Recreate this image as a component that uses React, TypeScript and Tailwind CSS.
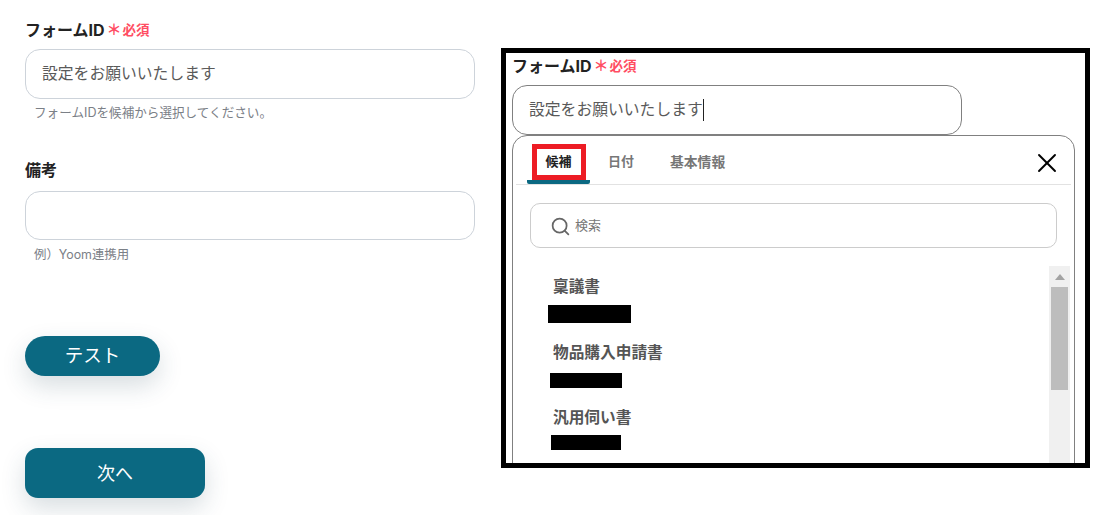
import { Search, X } from "lucide-react";

const font = "font-['Inter','Noto_Sans_CJK_JP',sans-serif]";

const candidates = [
  { name: "稟議書", barClass: "ml-[-5px] mt-[7px] h-[18px] w-[83px]", gap: "" },
  { name: "物品購入申請書", barClass: "ml-[-3px] mt-[9px] h-[15px] w-[72px]", gap: "mt-[19px]" },
  { name: "汎用伺い書", barClass: "ml-[-2px] mt-[6px] h-[15px] w-[70px]", gap: "mt-[19px]" },
];

function FieldLabel({ required, children }: { required?: boolean; children: string }) {
  return (
    <div className="flex h-[20px] items-center">
      <span className="text-[16px] leading-[20px] font-bold text-[#222]">{children}</span>
      {required && (
        <span className="ml-[2px] flex items-center text-[13.5px] leading-[20px] font-bold text-[#ff4d62]">
          <span className="mr-[1px] text-[15px] leading-[20px]">＊</span>
          必須
        </span>
      )}
    </div>
  );
}

function LeftForm() {
  return (
    <div className="flex w-[501px] shrink-0 flex-col pt-[20px] pl-[25px]">
      <FieldLabel required>フォームID</FieldLabel>
      <div className="mt-[9px] flex h-[50px] w-[450px] items-center rounded-[15px] border border-[#cdd3da] bg-white px-[16px] text-[15.8px] text-[#5a5a5a]">
        設定をお願いいたします
      </div>
      <p className="mt-[6px] pl-[9px] text-[12.6px] leading-[16px] text-[#7b8087]">
        フォームIDを候補から選択してください。
      </p>
      <div className="mt-[39px]">
        <FieldLabel>備考</FieldLabel>
      </div>
      <div className="mt-[11px] h-[49px] w-[450px] rounded-[15px] border border-[#cdd3da] bg-white" />
      <p className="mt-[7px] pl-[9px] text-[12.4px] leading-[16px] text-[#7b8087]">例）Yoom連携用</p>
      <button className="mt-[73px] h-[40px] w-[135px] rounded-full bg-[#0b6982] text-[18.5px] text-white shadow-[0_10px_25px_rgba(40,70,90,0.18)]">
        テスト
      </button>
      <button className="mt-[72px] h-[50px] w-[180px] rounded-[13px] bg-[#0b6982] text-[18px] text-white shadow-[0_10px_25px_rgba(40,70,90,0.18)]">
        次へ
      </button>
    </div>
  );
}

function CandidatePanel() {
  return (
    <div className="h-[340px] w-[563px] rounded-t-[15px] border border-[#808080] bg-white px-[3px]">
      <div className="relative flex h-[49px] items-end border-b border-[#e2e2e2] pl-[11px]">
        <div className="flex h-[48px] w-[63px] items-center justify-center rounded-b-[2px] border-b-[4px] border-[#0b6982] pt-[8px] text-[13px] font-bold text-[#222]">
          候補
        </div>
        <div className="ml-[18px] flex h-[48px] items-center pt-[8px] pb-[4px] text-[13px] font-bold text-[#777]">日付</div>
        <div className="ml-[36px] flex h-[48px] items-center pt-[8px] pb-[4px] text-[13.8px] font-bold text-[#777]">基本情報</div>
        <X size={32} strokeWidth={1.4} className="absolute top-[11px] right-[8px] text-black" />
        <div className="absolute top-[8px] left-[16px] h-[36px] w-[54px] border-[5px] border-[#ed1c24]" />
      </div>
      <div className="mx-[14px] mt-[18px] flex h-[45px] w-[527px] items-center rounded-[10px] border border-[#cccccc] pt-[1px] pl-[19px] text-[13px] text-[#777]">
        <Search size={21} strokeWidth={2} className="text-[#666]" />
        <span className="ml-[4px]">検索</span>
      </div>
      <div className="mt-[18px] flex">
        <div className="flex-1 pt-[10px] pl-[37px]">
          {candidates.map((item) => (
            <div key={item.name} className={item.gap}>
              <div className="text-[15.7px] leading-[22px] font-bold text-[#555]">{item.name}</div>
              <div className={`bg-black ${item.barClass}`} />
            </div>
          ))}
        </div>
        <div className="mr-[1px] h-[200px] w-[21px] shrink-0 bg-[#f0f0f0] px-[2px]">
          <div className="flex h-[21px] items-center justify-center">
            <div className="h-0 w-0 border-x-[5px] border-b-[6px] border-x-transparent border-b-[#a3a3a3]" />
          </div>
          <div className="h-[103px] w-[17px] bg-[#bdbdbd]" />
        </div>
      </div>
    </div>
  );
}

function AnnotatedFrame() {
  return (
    <div className="mt-[48px] h-[420px] w-[589px] shrink-0 overflow-hidden border-[5px] border-black bg-white pl-[6px]">
      <div className="mt-[3px]">
        <FieldLabel required>フォームID</FieldLabel>
      </div>
      <div className="mt-[9px] flex h-[50px] w-[450px] items-center rounded-[15px] border border-[#808080] bg-white px-[16px] text-[15.8px] text-[#5a5a5a]">
        設定をお願いいたします
        <span className="h-[22px] w-px bg-[#222]" />
      </div>
      <CandidatePanel />
    </div>
  );
}

export default function App() {
  return (
    <div className={`flex h-[515px] w-[1113px] overflow-hidden bg-white ${font}`}>
      <LeftForm />
      <AnnotatedFrame />
    </div>
  );
}
